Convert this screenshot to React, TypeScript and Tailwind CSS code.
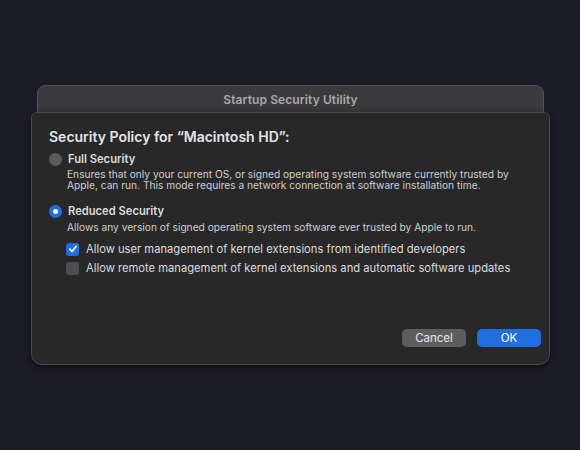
export default function App() {
  return (
    <div className="w-[580px] h-[450px] bg-[#1c1b28] pt-[85px] font-['Inter','Liberation_Sans',sans-serif] overflow-hidden">
      {/* window title bar */}
      <div className="ml-[37px] w-[507px] h-[28px] rounded-t-[9px] border border-b-0 border-[#555558] bg-[#3a3a3c] flex items-center justify-center">
        <span className="text-[12px] font-semibold text-[#a9a9ab] tracking-[0.1px]">Startup Security Utility</span>
      </div>

      {/* sheet */}
      <div className="ml-[31px] -mt-[1px] w-[519px] h-[253px] rounded-t-[6px] rounded-b-[11px] border border-[#4a4a4c] bg-[#282829] shadow-[0_2px_6px_rgba(0,0,0,0.5)] px-[17px] pt-[15px] pb-[17px] flex flex-col">
        <div className="text-[14px] font-semibold text-[#e4e4e6] leading-[17px]">
          Security Policy for “Macintosh HD”:
        </div>

        {/* full security */}
        <div className="mt-[7px] flex items-center gap-[6px]">
          <div className="w-[13px] h-[13px] rounded-full bg-[#5b5b5e]" />
          <span className="text-[11.2px] font-semibold text-[#dcdcde] leading-[14px]">Full Security</span>
        </div>
        <div className="ml-[18px] mt-[3px] text-[10.2px] leading-[11px] text-[#cfcfd1]">
          Ensures that only your current OS, or signed operating system software currently trusted by
          <br />
          Apple, can run. This mode requires a network connection at software installation time.
        </div>

        {/* reduced security */}
        <div className="mt-[13px] flex items-center gap-[6px]">
          <div className="w-[13px] h-[13px] rounded-full bg-[#1f6fe0] flex items-center justify-center">
            <div className="w-[5px] h-[5px] rounded-full bg-white" />
          </div>
          <span className="text-[11.2px] font-semibold text-[#dcdcde] leading-[14px]">Reduced Security</span>
        </div>
        <div className="ml-[18px] mt-[4px] text-[10.2px] leading-[11px] text-[#cfcfd1]">
          Allows any version of signed operating system software ever trusted by Apple to run.
        </div>

        <div className="ml-[17px] mt-[9px] flex flex-col gap-[5px]">
          <div className="flex items-center gap-[7px]">
            <div className="w-[13px] h-[13px] rounded-[3px] bg-[#1f6fe0] flex items-center justify-center">
              <svg width="10" height="10" viewBox="0 0 10 10" fill="none">
                <path d="M1.8 5.2 L4 7.5 L8.3 2.3" stroke="white" strokeWidth="1.7" strokeLinecap="round" strokeLinejoin="round" />
              </svg>
            </div>
            <span className="text-[11.2px] text-[#dcdcde] leading-[14px]">
              Allow user management of kernel extensions from identified developers
            </span>
          </div>
          <div className="flex items-center gap-[7px]">
            <div className="w-[13px] h-[13px] rounded-[3px] bg-[#4d4d50]" />
            <span className="text-[11.2px] text-[#dcdcde] leading-[14px]">
              Allow remote management of kernel extensions and automatic software updates
            </span>
          </div>
        </div>

        <div className="mt-auto -mr-[9px] flex justify-end gap-[11px]">
          <button className="w-[64px] h-[18px] rounded-[5px] bg-[#5d5d60] text-[11.5px] text-[#e6e6e8] leading-[18px]">
            Cancel
          </button>
          <button className="w-[64px] h-[18px] rounded-[5px] bg-[#1f6fe0] text-[11.5px] text-white leading-[18px]">
            OK
          </button>
        </div>
      </div>
    </div>
  );
}
